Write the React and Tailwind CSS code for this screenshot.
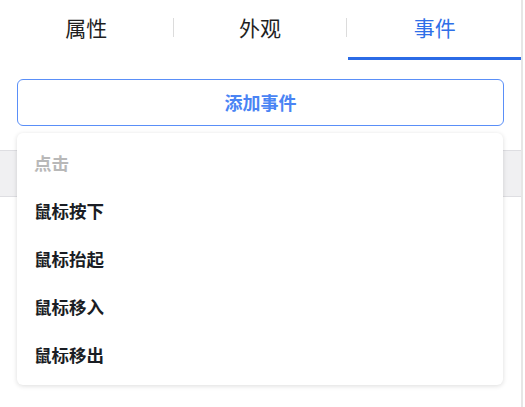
const TABS = ['属性', '外观', '事件'];

const EVENTS = [
  { label: '点击', disabled: true },
  { label: '鼠标按下' },
  { label: '鼠标抬起' },
  { label: '鼠标移入' },
  { label: '鼠标移出' }
];

const App = () => {
  const active = 2;
  return (
    <div
      className="relative w-[525px] h-[407px] bg-white overflow-hidden"
      style={{ fontFamily: '"Noto Sans CJK SC", "Noto Sans", sans-serif' }}
    >
      <div className="w-[523px] h-full border-r-2 border-[#e6e6e6]">
        {/* Tabs */}
        <div className="flex items-center h-[60px]">
          {TABS.map((tab, i) => (
            <div key={tab} className="contents">
              {i > 0 && <div className="w-px h-[19px] -mt-[6px] bg-[#dcdcdc] shrink-0"></div>}
              <div
                className={`flex-1 h-full flex items-center justify-center pb-[6px] ${
                  i === active ? 'border-b-[3px] border-[#2b6be6] pt-[3px] ml-[1px]' : ''
                }`}
              >
                <span className={`text-[21px] leading-none ${i === active ? 'text-[#2f6fe8]' : 'text-[#1f1f1f]'}`}>
                  {tab}
                </span>
              </div>
            </div>
          ))}
        </div>

        {/* Add event button */}
        <div className="px-[17px] pt-[19px]">
          <button
            type="button"
            className="w-full h-[47px] rounded-[6px] border border-[#5a8ff8] text-[#4a84f4] text-[18px] font-bold bg-white"
          >
            添加事件
          </button>
        </div>

        {/* Underlying content band */}
        <div className="mt-[24px] h-[47px] bg-[#f0f0f2] border-y border-[#dedee2]"></div>
      </div>

      {/* Dropdown menu */}
      <div className="absolute left-[17px] top-[133px] w-[486px] bg-white rounded-[6px] shadow-[0_1px_5px_rgba(0,0,0,0.14)] py-[6px]">
        {EVENTS.map((ev) => (
          <div
            key={ev.label}
            className={`h-[48px] flex items-center px-[17px] text-[17.5px] font-bold ${
              ev.disabled ? 'text-[#b8b8b8]' : 'text-[#1a1d24]'
            }`}
          >
            {ev.label}
          </div>
        ))}
      </div>
    </div>
  );
};

export default App;
